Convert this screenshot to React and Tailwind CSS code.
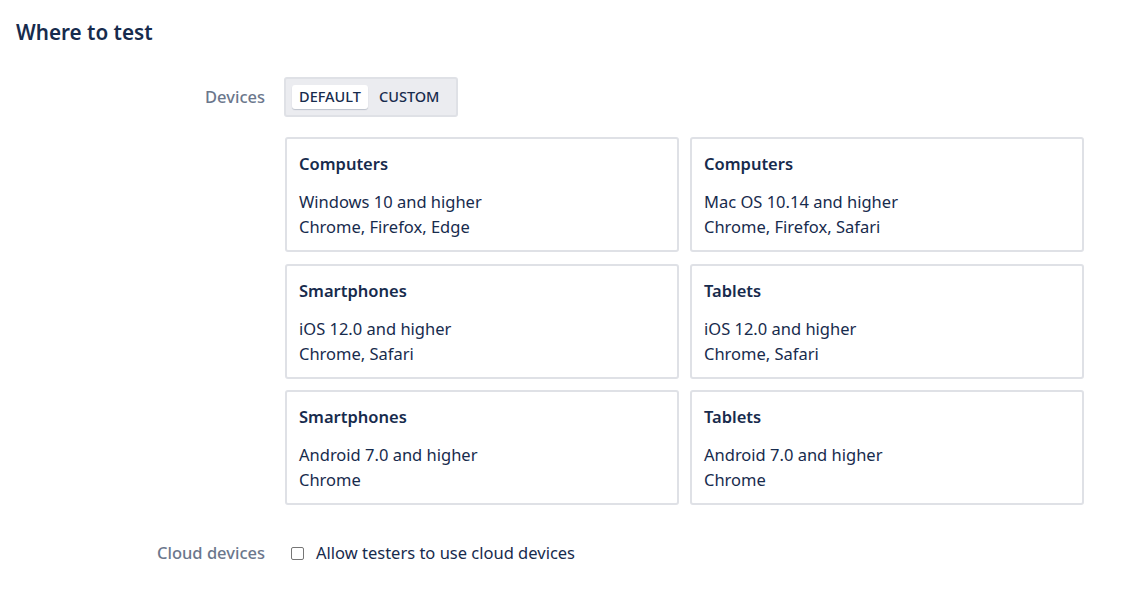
import React from "react";

const cards = [
  ["Computers", "Windows 10 and higher", "Chrome, Firefox, Edge"],
  ["Computers", "Mac OS 10.14 and higher", "Chrome, Firefox, Safari"],
  ["Smartphones", "iOS 12.0 and higher", "Chrome, Safari"],
  ["Tablets", "iOS 12.0 and higher", "Chrome, Safari"],
  ["Smartphones", "Android 7.0 and higher", "Chrome"],
  ["Tablets", "Android 7.0 and higher", "Chrome"],
];

export default function App() {
  return (
    <div
      className="min-h-[610px] bg-white pl-4 pt-[18px] text-[#172b4d]"
      style={{ fontFamily: '"Noto Sans", "Open Sans", sans-serif' }}
    >
      <h1 className="text-[20.7px] font-semibold leading-[28px]">Where to test</h1>
      <div className="mt-[31px] grid grid-cols-[249px_1fr] gap-x-[19px]">
        <div className="flex h-[40px] items-center justify-end text-[16.5px] font-medium text-[#6b778c]">
          Devices
        </div>
        <div>
          <div className="inline-flex h-[40px] items-center rounded-[3px] border-2 border-[#dfe1e6] bg-[#ebecf0] px-[6px]">
            <button className="h-[24px] w-[76px] rounded-[3px] bg-white text-[14.5px] font-medium shadow-[0_1px_1px_rgba(9,30,66,0.2)]">
              DEFAULT
            </button>
            <button className="h-[24px] pl-[11px] pr-[11px] text-[14.5px] font-medium">CUSTOM</button>
          </div>
          <div className="ml-[1px] mt-[20px] grid w-[799px] grid-cols-[394px_394px] gap-x-[11px] gap-y-[11.5px]">
            {cards.map(([t, a, b], i) => (
              <div
                key={i}
                className="h-[115px] rounded-[3px] border-2 border-[#dfe1e6] px-[12px] pt-[13px]"
              >
                <div className="text-[16.5px] font-semibold leading-[24px]">{t}</div>
                <div className="mt-[13px] text-[16.5px] leading-[25px]">
                  <div>{a}</div>
                  <div>{b}</div>
                </div>
              </div>
            ))}
          </div>
        </div>
        <div className="mt-[36px] flex h-[24px] items-center justify-end text-[16.5px] font-medium text-[#6b778c]">
          Cloud devices
        </div>
        <div className="mt-[36px] flex h-[24px] items-center">
          <span className="ml-[7px] mr-[12px] inline-block h-[13px] w-[13px] rounded-[2px] border border-[#767676] bg-white" />
          <span className="text-[16.5px]">Allow testers to use cloud devices</span>
        </div>
      </div>
    </div>
  );
}
